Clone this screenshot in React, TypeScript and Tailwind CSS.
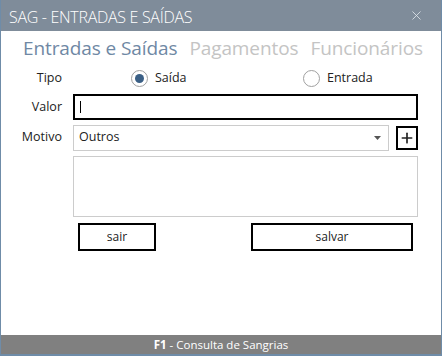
import { X, Plus } from "lucide-react";

const font = { fontFamily: '"Open Sans", "Noto Sans", sans-serif' };

function Radio({ checked, label }: { checked?: boolean; label: string }) {
  return (
    <div className="flex items-center gap-[7px]">
      <span className="flex h-[17px] w-[17px] items-center justify-center rounded-full border border-[#a0a0a0] bg-white">
        {checked && <span className="h-[9px] w-[9px] rounded-full bg-[#3a5f85]" />}
      </span>
      <span className="text-[12.5px] text-[#222]">{label}</span>
    </div>
  );
}

export default function App() {
  return (
    <div
      className="flex h-[356px] w-[442px] flex-col border-x border-b-2 border-[#6f8ca8] bg-white"
      style={font}
    >
      <div className="flex h-[31px] shrink-0 items-center justify-between bg-[#7f8c9a] pl-[8px] pr-[17px]">
        <span className="pt-[2px] text-[16px] font-light tracking-[-0.3px] text-white">SAG - ENTRADAS E SAÍDAS</span>
        <X size={15} strokeWidth={1.25} className="text-[#e6ebf0]" />
      </div>

      <div className="flex-1">
        <div className="flex h-[34px] items-center gap-[12px] pl-[22px] text-[19px] tracking-[-0.1px]">
          <span className="text-[#6f88a4]">Entradas e Saídas</span>
          <span className="text-[#c4c4c4]">Pagamentos</span>
          <span className="text-[#c4c4c4]">Funcionários</span>
        </div>

        <div className="grid grid-cols-[61px_1fr] gap-x-[11px] pr-[23px] text-[12.5px] text-[#222]">
          <span className="flex h-[27px] items-center justify-end">Tipo</span>
          <div className="flex h-[27px] items-center pl-[58px]">
            <div className="w-[172px]">
              <Radio checked label="Saída" />
            </div>
            <Radio label="Entrada" />
          </div>

          <span className="flex h-[30px] items-center justify-end">Valor</span>
          <div className="flex h-[30px] items-center">
            <div className="flex h-[26px] w-full items-center border-2 border-black px-[5px]">
              <span className="h-[12px] w-px bg-black" />
            </div>
          </div>

          <span className="flex h-[31px] items-center justify-end">Motivo</span>
          <div className="flex h-[31px] items-center gap-[7px]">
            <div className="flex h-[26px] flex-1 items-center justify-between border border-[#cccccc] pl-[5px] pr-[7px]">
              <span>Outros</span>
              <svg width="7" height="4" viewBox="0 0 7 4">
                <path d="M0 0h7L3.5 4z" fill="#555" />
              </svg>
            </div>
            <div className="flex h-[24px] w-[22px] items-center justify-center border-2 border-black">
              <Plus size={16} strokeWidth={2.5} />
            </div>
          </div>

          <span />
          <div className="mt-[3px] h-[61px] border border-[#cccccc]" />

          <span />
          <div className="mt-[6px] flex items-center justify-between pl-[5px] pr-[5px] text-[12px]">
            <button className="h-[28px] w-[78px] border-2 border-black">sair</button>
            <button className="h-[28px] w-[162px] border-2 border-black">salvar</button>
          </div>
        </div>
      </div>

      <div className="flex h-[19px] shrink-0 items-center justify-center bg-[#808080] text-[11.5px] text-white">
        <span className="font-bold">F1</span>
        <span>&nbsp;- Consulta de Sangrias</span>
      </div>
    </div>
  );
}
